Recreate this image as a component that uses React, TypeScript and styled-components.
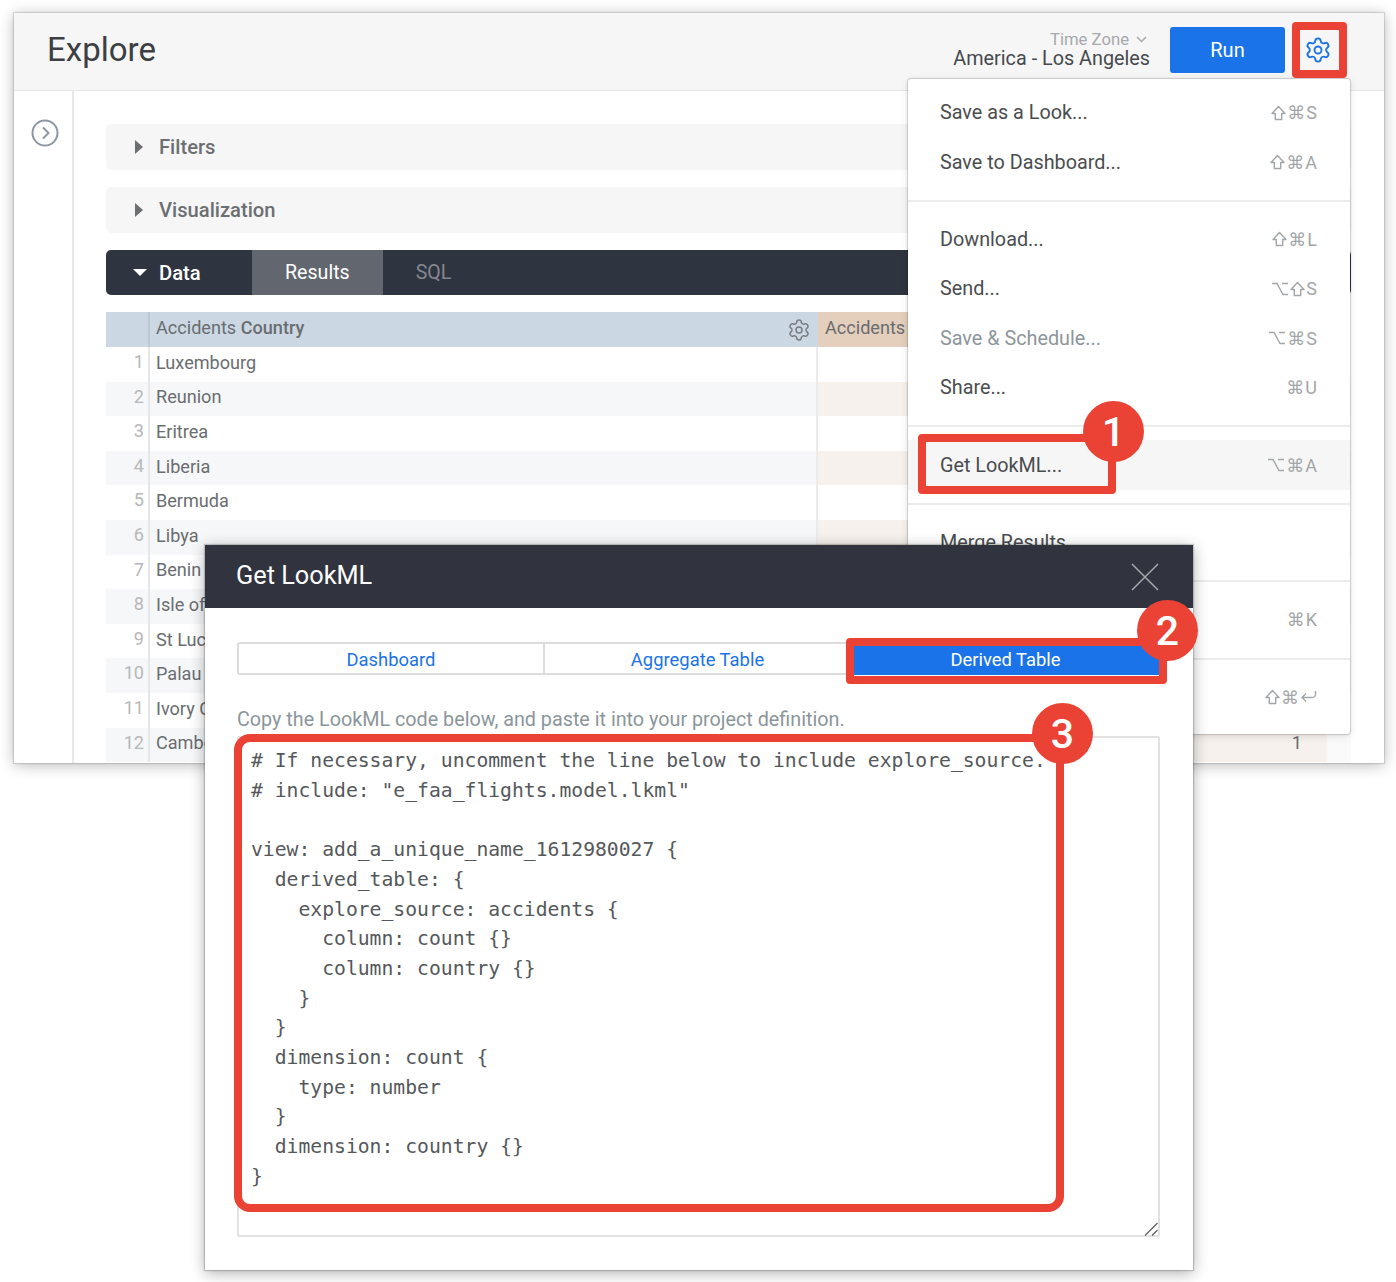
import React from 'react';
import styled, { createGlobalStyle } from 'styled-components';
import { Settings } from 'lucide-react';

const GlobalStyle = createGlobalStyle`
  html, body {
    margin: 0;
    padding: 0;
    background: #ffffff;
    font-family: Roboto, "DejaVu Sans", sans-serif;
  }
`;

const Page = styled.div`
  position: relative;
  width: 1396px;
  height: 1282px;
  padding-top: 13px;
  box-sizing: border-box;
  overflow: hidden;
  background: #ffffff;
`;

const ExploreWindow = styled.div`
  display: flex;
  flex-direction: column;
  width: 1370px;
  height: 750px;
  margin-left: 14px;
  overflow: hidden;
  background: #ffffff;
  box-shadow: 0 0 1px 1px rgba(0, 0, 0, 0.12), 0 2px 14px rgba(0, 0, 0, 0.28);
`;

const Header = styled.header`
  display: flex;
  align-items: center;
  flex: none;
  height: 74px;
  padding: 0 0 3px 33px;
  background: #f6f6f6;
  border-bottom: 1px solid #e6e6e6;
`;

const Title = styled.h1`
  flex: 1;
  margin: 0 0 2px;
  font-size: 33px;
  font-weight: 400;
  color: #3c4043;
`;

const TimeZone = styled.div`
  display: flex;
  flex-direction: column;
  align-items: flex-end;
  margin-right: 20px;
`;

const TimeZoneLabel = styled.div`
  display: flex;
  align-items: center;
  gap: 7px;
  height: 17px;
  margin-right: 3px;
  font-size: 16.7px;
  line-height: 17px;
  color: #a6a9ad;
`;

const TimeZoneValue = styled.div`
  font-size: 19.8px;
  line-height: 22px;
  color: #46494d;
`;

const RunButton = styled.button`
  width: 115px;
  height: 46px;
  border: 0;
  border-radius: 3px;
  background: #1a73e8;
  color: #ffffff;
  font-family: inherit;
  font-size: 20px;
  margin-right: 19px;
`;

const GearButton = styled.div`
  display: flex;
  color: #1a73e8;
  margin-right: 52px;
`;

const Body = styled.div`
  display: flex;
  flex: 1;
  min-height: 0;
`;

const Rail = styled.aside`
  flex: none;
  width: 60px;
  padding: 28px 0 0 17px;
  box-sizing: border-box;
  border-right: 2px solid #e6e8ea;
  color: #8d97a3;
`;

const Main = styled.main`
  flex: 1;
  min-width: 0;
  padding: 33px 33px 0 32px;
`;

const Section = styled.div`
  display: flex;
  align-items: center;
  gap: 16px;
  height: 46px;
  margin-bottom: 17px;
  padding-left: 29px;
  border-radius: 5px;
  background: #f6f6f6;
  font-size: 20.2px;
  font-weight: 500;
  color: #6c6f72;
`;

const Caret = styled.span<{ $down?: boolean }>`
  width: 0;
  height: 0;
  ${(p) =>
    p.$down
      ? `border-left: 7px solid transparent; border-right: 7px solid transparent; border-top: 7px solid #ffffff;`
      : `border-top: 7px solid transparent; border-bottom: 7px solid transparent; border-left: 8px solid #6c6f72;`}
`;

const DataBar = styled.div`
  display: flex;
  height: 45px;
  margin-bottom: 17px;
  border-radius: 5px;
  overflow: hidden;
  background: #2e3440;
  font-size: 19.6px;
`;

const DataToggle = styled.div`
  display: flex;
  align-items: center;
  gap: 12px;
  width: 146px;
  padding-left: 27px;
  box-sizing: border-box;
  font-size: 20.2px;
  font-weight: 500;
  color: #ffffff;
`;

const DataTab = styled.div<{ $active?: boolean }>`
  display: flex;
  align-items: center;
  padding: 0 33px;
  background: ${(p) => (p.$active ? '#62666f' : 'transparent')};
  color: ${(p) => (p.$active ? '#ffffff' : '#85888f')};
`;

const Row = styled.div<{ $shade?: boolean }>`
  display: grid;
  grid-template-columns: 44px 668px 509px 24px;
  height: 34.6px;
  font-size: 18.1px;
  line-height: 30px;
  color: #6a6d70;
  background: ${(p) => (p.$shade ? '#f6f7f9' : '#ffffff')};
`;

const HeadRow = styled(Row)`
  height: 35px;
  background: #cbd8e4;
`;

const RowNumber = styled.div`
  padding-right: 4px;
  text-align: right;
  color: #b6b8ba;
  border-right: 2px solid #e4e6e8;
`;

const HeadNumber = styled(RowNumber)`
  border-right-color: #bdcad6;
`;

const Cell = styled.div`
  display: flex;
  justify-content: space-between;
  align-items: center;
  height: 100%;
  padding: 0 6px 3px;
  white-space: nowrap;
  overflow: hidden;
  border-right: 2px solid #ebebeb;
  box-sizing: border-box;
`;

const HeadCell = styled(Cell)`
  border-right: 0;
  color: #696d70;
  strong {
    font-weight: 500;
  }
  svg {
    flex: none;
    color: #7a7d80;
    margin: 3px 1px 0 0;
  }
`;

const CountHead = styled(HeadCell)`
  padding-left: 7px;
  background: #e4cfbc;
`;

const CountCell = styled(Cell)<{ $shade?: boolean }>`
  justify-content: flex-end;
  padding-right: 25px;
  border-right: 0;
  background: ${(p) => (p.$shade ? '#f6f1ec' : '#ffffff')};
`;

const Filler = styled.div<{ $shade?: boolean }>`
  background: ${(p) => (p.$shade ? '#fafafa' : '#ffffff')};
`;

const Menu = styled.div`
  position: absolute;
  left: 908px;
  top: 79px;
  width: 442px;
  height: 655px;
  background: #ffffff;
  border-radius: 3px;
  box-shadow: 0 0 1px 1px rgba(0, 0, 0, 0.16), 0 2px 8px rgba(0, 0, 0, 0.12);
`;

const MenuGroup = styled.div`
  padding: 13px 0;
  border-bottom: 2px solid #ececec;
  &:first-child {
    padding-top: 9px;
  }
  &:last-child {
    border-bottom: 0;
  }
`;

const MenuItem = styled.div<{ $active?: boolean; $muted?: boolean }>`
  display: flex;
  justify-content: space-between;
  align-items: center;
  height: 49.4px;
  padding: 0 33px 0 32px;
  font-size: 19.8px;
  color: ${(p) => (p.$muted ? '#8d969c' : '#4a4d50')};
  background: ${(p) => (p.$active ? '#f6f6f6' : 'transparent')};
`;

const Shortcut = styled.span`
  display: flex;
  align-items: center;
  gap: 1px;
  font-size: 18px;
  color: #a3a6a9;
  svg {
    flex: none;
    fill: none;
    stroke: #a3a6a9;
    stroke-width: 1.4;
  }
`;

const Dialog = styled.section`
  position: absolute;
  left: 205px;
  top: 545px;
  display: flex;
  flex-direction: column;
  width: 988px;
  height: 725px;
  background: #ffffff;
  box-shadow: 0 0 1px 1px rgba(0, 0, 0, 0.18), 0 3px 14px rgba(0, 0, 0, 0.32);
`;

const DialogHeader = styled.div`
  display: flex;
  justify-content: space-between;
  align-items: center;
  flex: none;
  height: 60px;
  padding: 0 34px 3px 31px;
  background: #31343f;
  color: #ffffff;
  font-size: 25.3px;
`;

const CloseIcon = styled.svg`
  width: 28px;
  height: 28px;
  margin-top: 3px;
  stroke: #a6a8ad;
  stroke-width: 1.5;
`;

const DialogBody = styled.div`
  display: flex;
  flex-direction: column;
  flex: 1;
  min-height: 0;
  padding: 34px 33px 33px 32px;
`;

const TabRow = styled.div`
  display: grid;
  grid-template-columns: 304px 307px 1fr;
  height: 33px;
  flex: none;
  border: 2px solid #dcdcdc;
  border-radius: 3px;
  box-sizing: border-box;
`;

const TabButton = styled.div<{ $selected?: boolean }>`
  display: flex;
  align-items: center;
  justify-content: center;
  padding-top: 1px;
  font-size: 18.4px;
  color: ${(p) => (p.$selected ? '#ffffff' : '#1a73e8')};
  background: ${(p) => (p.$selected ? '#1a73e8' : '#ffffff')};
  margin: ${(p) => (p.$selected ? '-2px -1px -2px 0' : '0')};
  & + & {
    border-left: 2px solid #dcdcdc;
  }
`;

const Hint = styled.p`
  flex: none;
  margin: 33px 0 4px;
  font-size: 19.76px;
  line-height: 24px;
  white-space: nowrap;
  color: #8b969b;
`;

const CodeWrap = styled.div`
  position: relative;
  display: flex;
  flex: 1;
  min-height: 0;
`;

const CodeArea = styled.textarea`
  flex: 1;
  width: 100%;
  margin: 0;
  padding: 8px 12px;
  box-sizing: border-box;
  border: 2px solid #e2e2e2;
  border-radius: 2px;
  outline: none;
  resize: none;
  font-family: "DejaVu Sans Mono", "Liberation Mono", monospace;
  font-size: 19.72px;
  line-height: 29.7px;
  color: #55585b;
  white-space: pre;
  overflow: hidden;
`;

const ResizeGrip = styled.svg`
  position: absolute;
  right: 2px;
  bottom: 1px;
  width: 14px;
  height: 14px;
  stroke: #5c5c5c;
  stroke-width: 1.2;
`;

const Mark = styled.div<{ $x: number; $y: number; $w: number; $h: number; $r?: number }>`
  position: absolute;
  left: ${(p) => p.$x}px;
  top: ${(p) => p.$y}px;
  width: ${(p) => p.$w}px;
  height: ${(p) => p.$h}px;
  box-sizing: border-box;
  border: 8px solid #ea4335;
  border-radius: ${(p) => p.$r ?? 4}px;
`;

const Badge = styled.div<{ $x: number; $y: number }>`
  position: absolute;
  left: ${(p) => p.$x}px;
  top: ${(p) => p.$y}px;
  display: flex;
  align-items: center;
  justify-content: center;
  width: 61px;
  height: 61px;
  border-radius: 50%;
  background: #ea4335;
  color: #ffffff;
  font-size: 41px;
  font-weight: 500;
`;

const ShiftKey = () => (
  <svg width="15" height="16" viewBox="0 0 15 16">
    <path d="M7.5 1.5L14 8.5h-3.3v6H4.3v-6H1z" strokeLinejoin="round" />
  </svg>
);

const OptionKey = () => (
  <svg width="18" height="16" viewBox="0 0 18 16">
    <path d="M1 2.5h5l6 11h5M11 2.5h6" />
  </svg>
);

const ReturnKey = () => (
  <svg width="17" height="16" viewBox="0 0 17 16">
    <path d="M15.5 2v3.5a3 3 0 0 1-3 3H2M6 4.5L2 8.5l4 4" />
  </svg>
);

const keyIcons: Record<string, React.ReactNode> = {
  '⇧': <ShiftKey />,
  '⌥': <OptionKey />,
  '↩': <ReturnKey />,
};

const countries = [
  'Luxembourg',
  'Reunion',
  'Eritrea',
  'Liberia',
  'Bermuda',
  'Libya',
  'Benin',
  'Isle of Man',
  'St Lucia',
  'Palau',
  'Ivory Coast',
  'Cambodia',
];

const menuGroups = [
  [
    { label: 'Save as a Look...', keys: '⇧⌘S' },
    { label: 'Save to Dashboard...', keys: '⇧⌘A' },
  ],
  [
    { label: 'Download...', keys: '⇧⌘L' },
    { label: 'Send...', keys: '⌥⇧S' },
    { label: 'Save & Schedule...', keys: '⌥⌘S', muted: true },
    { label: 'Share...', keys: '⌘U' },
  ],
  [{ label: 'Get LookML...', keys: '⌥⌘A', active: true }],
  [{ label: 'Merge Results', keys: '' }],
  [{ label: '', keys: '⌘K' }],
  [{ label: '', keys: '⇧⌘↩' }],
];

const code = `# If necessary, uncomment the line below to include explore_source.
# include: "e_faa_flights.model.lkml"

view: add_a_unique_name_1612980027 {
  derived_table: {
    explore_source: accidents {
      column: count {}
      column: country {}
    }
  }
  dimension: count {
    type: number
  }
  dimension: country {}
}`;

export default function App() {
  return (
    <Page>
      <GlobalStyle />
      <ExploreWindow>
        <Header>
          <Title>Explore</Title>
          <TimeZone>
            <TimeZoneLabel>
              Time Zone
              <svg width="11" height="11" viewBox="0 0 11 11" fill="none" stroke="#a6a9ad" strokeWidth="1.5">
                <path d="M1 3l4.5 4.5L10 3" />
              </svg>
            </TimeZoneLabel>
            <TimeZoneValue>America - Los Angeles</TimeZoneValue>
          </TimeZone>
          <RunButton>Run</RunButton>
          <GearButton>
            <Settings size={28} strokeWidth={1.6} />
          </GearButton>
        </Header>
        <Body>
          <Rail>
            <svg width="28" height="28" viewBox="0 0 28 28" fill="none" stroke="currentColor" strokeWidth="2">
              <circle cx="14" cy="14" r="12.5" />
              <path d="M12 8.5l5.5 5.5-5.5 5.5" />
            </svg>
          </Rail>
          <Main>
            <Section>
              <Caret />
              Filters
            </Section>
            <Section>
              <Caret />
              Visualization
            </Section>
            <DataBar>
              <DataToggle>
                <Caret $down />
                Data
              </DataToggle>
              <DataTab $active>Results</DataTab>
              <DataTab>SQL</DataTab>
            </DataBar>
            <HeadRow>
              <HeadNumber />
              <HeadCell>
                <span>
                  Accidents <strong>Country</strong>
                </span>
                <Settings size={24} strokeWidth={1.5} />
              </HeadCell>
              <CountHead>Accidents</CountHead>
              <Filler />
            </HeadRow>
            {countries.map((country, i) => {
              const shade = i % 2 === 1;
              return (
                <Row key={country} $shade={shade}>
                  <RowNumber>{i + 1}</RowNumber>
                  <Cell>{country}</Cell>
                  {/* the counts above this row sit behind the open menu */}
                  <CountCell $shade={shade}>{i === countries.length - 1 ? 1 : ''}</CountCell>
                  <Filler $shade={shade} />
                </Row>
              );
            })}
          </Main>
        </Body>
      </ExploreWindow>

      <Menu>
        {menuGroups.map((group, g) => (
          <MenuGroup key={g}>
            {group.map((item) => (
              <MenuItem key={item.keys + item.label} $active={item.active} $muted={item.muted}>
                <span>{item.label}</span>
                <Shortcut>
                  {Array.from(item.keys).map((k) => (
                    <React.Fragment key={k}>{keyIcons[k] ?? <span>{k}</span>}</React.Fragment>
                  ))}
                </Shortcut>
              </MenuItem>
            ))}
          </MenuGroup>
        ))}
      </Menu>

      <Dialog>
        <DialogHeader>
          Get LookML
          <CloseIcon viewBox="0 0 28 28">
            <path d="M1 1l26 26M27 1L1 27" />
          </CloseIcon>
        </DialogHeader>
        <DialogBody>
          <TabRow>
            <TabButton>Dashboard</TabButton>
            <TabButton>Aggregate Table</TabButton>
            <TabButton $selected>Derived Table</TabButton>
          </TabRow>
          <Hint>Copy the LookML code below, and paste it into your project definition.</Hint>
          <CodeWrap>
            <CodeArea readOnly spellCheck={false} defaultValue={code} />
            <ResizeGrip viewBox="0 0 14 14">
              <path d="M1 13.5L13.5 1M8 13.5L13.5 8" />
            </ResizeGrip>
          </CodeWrap>
        </DialogBody>
      </Dialog>

      <Mark $x={1292} $y={22} $w={55} $h={56} />
      <Mark $x={918} $y={434} $w={198} $h={60} />
      <Mark $x={846} $y={638} $w={321} $h={46} />
      <Mark $x={234} $y={734} $w={830} $h={478} $r={16} />
      <Badge $x={1083} $y={401}>1</Badge>
      <Badge $x={1137} $y={600}>2</Badge>
      <Badge $x={1032} $y={703}>3</Badge>
    </Page>
  );
}
